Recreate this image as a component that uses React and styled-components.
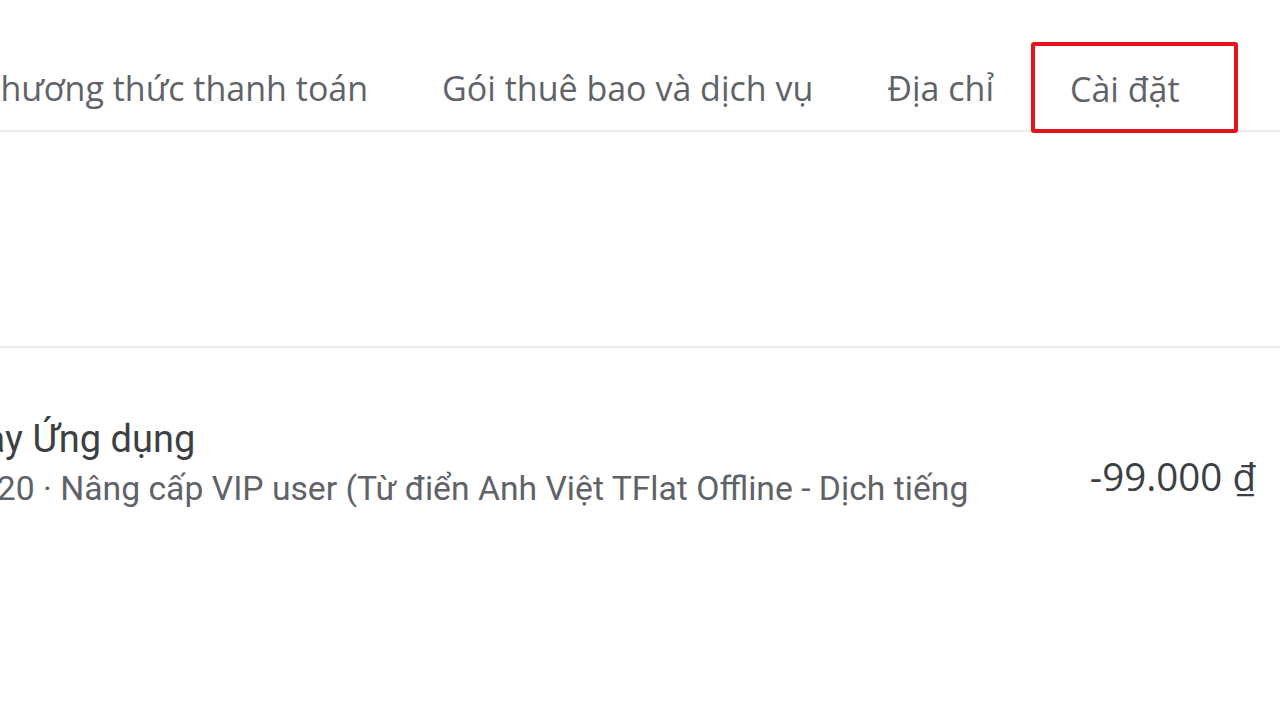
import React from 'react';
import styled, { createGlobalStyle } from 'styled-components';

const GlobalStyle = createGlobalStyle`
  html, body {
    margin: 0;
    padding: 0;
    background: #fff;
  }
  body {
    width: 1280px;
    height: 720px;
    overflow: hidden;
    font-family: Roboto, "Noto Sans", sans-serif;
  }
`;

const Page = styled.div`
  width: 1280px;
  height: 720px;
  overflow: hidden;
  background: #fff;
`;

const TabBar = styled.div`
  display: flex;
  align-items: stretch;
  margin-top: 42px;
  height: 88px;
  border-bottom: 2px solid #ececec;
  margin-left: -57px;
`;

const Tab = styled.div`
  display: flex;
  align-items: center;
  padding: 4px 37px 0;
  font-family: "Open Sans", "Noto Sans", sans-serif;
  font-size: 34px;
  color: #5f6368;
  white-space: nowrap;
`;

const Highlight = styled(Tab)`
  height: 91px;
  box-sizing: border-box;
  border: 4px solid #e3141b;
  border-radius: 3px;
  padding: 2px 54px 0 35px;
  position: relative;
  z-index: 1;
`;

const Section = styled.div`
  height: 214px;
  border-bottom: 2px solid #ededed;
`;

const Row = styled.div`
  display: flex;
  justify-content: space-between;
  align-items: flex-start;
  padding: 70px 24px 0 0;
  margin-left: -178px;
`;

const Info = styled.div`
  display: flex;
  flex-direction: column;
  gap: 10px;
`;

const Title = styled.div`
  font-size: 38px;
  line-height: 42px;
  color: #3c4043;
  white-space: nowrap;
`;

const Subtitle = styled.div`
  font-size: 33.7px;
  line-height: 38px;
  color: #5f6368;
  white-space: nowrap;
`;

const Amount = styled.div`
  font-family: "Open Sans", "Noto Sans", sans-serif;
  font-size: 38.5px;
  line-height: 40px;
  color: #3c4043;
  white-space: nowrap;
  margin-top: 38px;
`;

const tabs = ['Phương thức thanh toán', 'Gói thuê bao và dịch vụ', 'Địa chỉ'];

export default function App() {
  return (
    <Page>
      <GlobalStyle />
      <TabBar>
        {tabs.map((t) => (
          <Tab key={t}>{t}</Tab>
        ))}
        <Highlight>Cài đặt</Highlight>
      </TabBar>
      <Section />
      <Row>
        <Info>
          <Title>Google Play Ứng dụng</Title>
          <Subtitle>15 thg 6, 2020 · Nâng cấp VIP user (Từ điển Anh Việt TFlat Offline - Dịch tiếng</Subtitle>
        </Info>
        <Amount>-99.000 ₫</Amount>
      </Row>
    </Page>
  );
}
